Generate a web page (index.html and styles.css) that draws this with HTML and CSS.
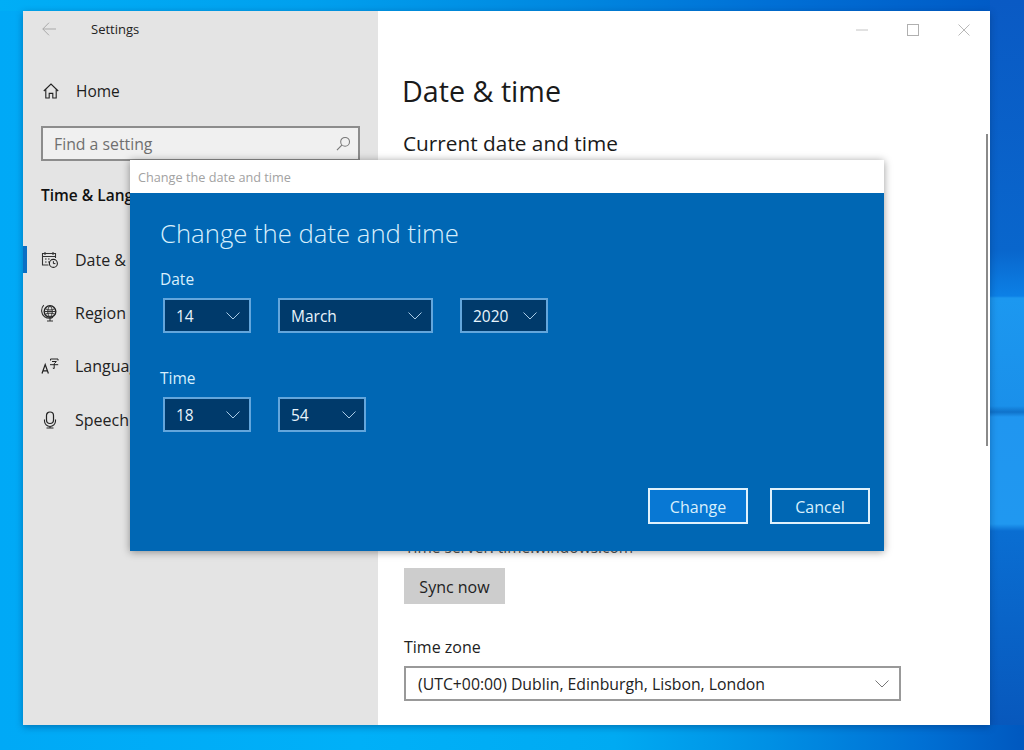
FILE: index.html
```html
<!DOCTYPE html>
<html lang="en">
<head>
<meta charset="utf-8">
<title>Settings - Date &amp; time</title>
<link rel="stylesheet" href="styles.css">
</head>
<body>
<main class="desktop">
  <section class="window">
    <aside class="nav">
      <div class="nav-title">
        <svg class="back" viewBox="0 0 14 14" width="14" height="14"><path d="M14 7H.8M7 .7L.8 7 7 13.300" fill="none" stroke="#a9a9a9" stroke-width="1"/></svg>
        <span>Settings</span>
      </div>
      <div class="nav-home">
        <svg viewBox="0 0 16 16" width="16" height="16"><path d="M.8 8L8 1l7.2 7M2.8 6.500V15h3.400v-4.600h3.600V15h3.400V6.500" fill="none" stroke="#222" stroke-width="1.100"/></svg>
        <span>Home</span>
      </div>
      <div class="search">
        <span>Find a setting</span>
        <svg viewBox="0 0 16 16" width="15" height="15"><circle cx="9.700" cy="6.200" r="4.700" fill="none" stroke="#777" stroke-width="1.100"/><path d="M6.200 9.700L1 15" stroke="#777" stroke-width="1.200"/></svg>
      </div>
      <h2 class="nav-heading">Time &amp; Language</h2>
      <ul class="nav-list">
        <li class="nav-item active">
          <svg viewBox="0 0 18 18" width="18" height="18"><path d="M7.500 14H1.500V2.500h13V7M1.500 5.500h13M4 1v3M12 1v3M4 8h1.600M7 8h1.600M4 11h1.600M7 11h1.600" fill="none" stroke="#333" stroke-width="1.100"/><circle cx="12.400" cy="12.400" r="4" fill="none" stroke="#222" stroke-width="1.100"/><path d="M12.400 10.200v2.400h2" fill="none" stroke="#222"/></svg>
          <span>Date &amp; time</span>
        </li>
        <li class="nav-item">
          <svg viewBox="0 0 18 18" width="18" height="18"><circle cx="9" cy="7.500" r="5.800" fill="none" stroke="#222" stroke-width="1.400"/><path d="M4 4.500c3 2 7 2 10 0M3.700 10.500c3-1.800 7.600-1.800 10.600 0M9 1.700c-3 3-3 8.600 0 11.600M9 1.700c3 3 3 8.600 0 11.600M3.200 7.500h11.600" fill="none" stroke="#333" stroke-width="1"/><path d="M2.800 1.200c-3.400 3.400-2.600 9.300.8 11.600 2.500 1.700 5.700 1.900 8.400.4M9 14.500V17M6 17h6" fill="none" stroke="#333" stroke-width="1.100"/></svg>
          <span>Region</span>
        </li>
        <li class="nav-item">
          <svg viewBox="0 0 18 18" width="18" height="18"><path d="M1 16.500L4.200 7.500l3.200 9M2 13.800h4.400" fill="none" stroke="#222" stroke-width="1.200"/><path d="M9.500 3.500V2H17v1.500M11 4.500h4.400l-2.200 2.200M9 7.700h8.200M13.200 6.700v4.800l-1.400-.4" fill="none" stroke="#222" stroke-width="1"/></svg>
          <span>Language</span>
        </li>
        <li class="nav-item">
          <svg viewBox="0 0 18 18" width="18" height="18"><rect x="5.500" y="1" width="7" height="11.500" rx="3.500" fill="none" stroke="#222" stroke-width="1.200"/><path d="M3.500 8.500V10a5 5 0 0 0 11 0V8.500M9 15v2M5.500 17h7" fill="none" stroke="#222" stroke-width="1.100"/></svg>
          <span>Speech</span>
        </li>
      </ul>
    </aside>
    <div class="content">
      <div class="controls">
        <svg viewBox="0 0 12 12" width="12" height="12"><path d="M0 6h12" stroke="#c4c4c4"/></svg>
        <svg viewBox="0 0 12 12" width="12" height="12"><rect x=".5" y=".5" width="11" height="11" fill="none" stroke="#b0b0b0"/></svg>
        <svg viewBox="0 0 12 12" width="12" height="12"><path d="M.5.500l11 11M11.500.500l-11 11" stroke="#b8b8b8"/></svg>
      </div>
      <h1>Date &amp; time</h1>
      <h2 class="section">Current date and time</h2>
      <p class="server">Time server: time.windows.com</p>
      <button class="sync" type="button">Sync now</button>
      <label class="tz-label">Time zone</label>
      <div class="tz">
        <span>(UTC+00:00) Dublin, Edinburgh, Lisbon, London</span>
        <svg viewBox="0 0 14 8" width="14" height="8"><path d="M.5.500L7 7 13.500.500" fill="none" stroke="#777"/></svg>
      </div>
      <div class="scrollbar"></div>
    </div>
  </section>

  <section class="dialog">
    <div class="dialog-title">Change the date and time</div>
    <div class="dialog-body">
      <h2 class="dialog-heading">Change the date and time</h2>
      <div class="field-label date-label">Date</div>
      <div class="picker-row">
        <div class="picker p-day"><span>14</span><svg viewBox="0 0 14 8" width="14" height="8"><path d="M.5.500L7 7 13.500.500" fill="none" stroke="#a9cbe6"/></svg></div>
        <div class="picker p-month"><span>March</span><svg viewBox="0 0 14 8" width="14" height="8"><path d="M.5.500L7 7 13.500.500" fill="none" stroke="#a9cbe6"/></svg></div>
        <div class="picker p-year"><span>2020</span><svg viewBox="0 0 14 8" width="14" height="8"><path d="M.5.500L7 7 13.500.500" fill="none" stroke="#a9cbe6"/></svg></div>
      </div>
      <div class="field-label time-label">Time</div>
      <div class="picker-row">
        <div class="picker p-day"><span>18</span><svg viewBox="0 0 14 8" width="14" height="8"><path d="M.5.500L7 7 13.500.500" fill="none" stroke="#a9cbe6"/></svg></div>
        <div class="picker p-min"><span>54</span><svg viewBox="0 0 14 8" width="14" height="8"><path d="M.5.500L7 7 13.500.500" fill="none" stroke="#a9cbe6"/></svg></div>
      </div>
      <div class="actions">
        <button class="btn primary" type="button">Change</button>
        <button class="btn" type="button">Cancel</button>
      </div>
    </div>
  </section>
</main>
</body>
</html>
```

FILE: styles.css
```css
* { box-sizing: border-box; }
html, body { margin: 0; height: 100%; }
body { font-family: "Open Sans", "Noto Sans", "Liberation Sans", sans-serif; overflow: hidden; }

.desktop {
  position: relative;
  width: 1024px;
  height: 750px;
  overflow: hidden;
  background:
    linear-gradient(180deg, #0a5ac4 0, #0966cc 250px, #0c80e6 296px, #1c98f0 298px, #1a90ea 406px, #0f72ca 412px, #2096f0 417px, #2098f0 524px, #0a6ed2 531px, #0858bc 725px) right top / 34px 725px no-repeat,
    linear-gradient(90deg, #00aef6 0, #00a0ee 30%, #0088e0 55%, #0070d6 75%, #0058c4 100%) left top / 100% 11px no-repeat,
    linear-gradient(90deg, #00a9f6 0, #00b0f8 35%, #00aaf2 60%, #0090e4 75%, #0070d4 90%, #0058bf 100%);
}

.window {
  position: absolute;
  left: 23px;
  top: 11px;
  width: 967px;
  height: 714px;
  display: flex;
  background: #fff;
  box-shadow: 0 2px 7px rgba(0, 40, 90, .4);
}

.nav {
  width: 355px;
  flex: none;
  background: #e4e4e4;
  color: #111;
  padding: 0 18px;
}
.nav-title {
  height: 36px;
  display: flex;
  align-items: center;
  gap: 35px;
  font-size: 13px;
  color: #222;
  margin-left: 1px;
}
.nav-home {
  display: flex;
  align-items: center;
  gap: 17px;
  margin: 34px 0 0 2px;
  height: 20px;
  font-size: 15.500px;
  color: #1c1c1c;
}
.search {
  margin-top: 25px;
  height: 35px;
  width: 319px;
  border: 2px solid #8c8c8c;
  background: #f0f0f0;
  display: flex;
  align-items: center;
  justify-content: space-between;
  padding: 0 7px 0 11px;
  font-size: 15.800px;
  color: #6f6f6f;
}
.nav-heading {
  margin: 22px 0 0;
  height: 24px;
  line-height: 24px;
  font-size: 15.500px;
  font-weight: 600;
  color: #111;
  white-space: nowrap;
}
.nav-list { list-style: none; margin: 26px -18px 0; padding: 0; }
.nav-item {
  height: 53.300px;
  display: flex;
  align-items: center;
  gap: 16px;
  padding-left: 18px;
  font-size: 16px;
  color: #222;
  white-space: nowrap;
  position: relative;
}
.nav-item.active::before {
  content: "";
  position: absolute;
  left: 0;
  top: 13px;
  width: 4px;
  height: 27px;
  background: #0a6fc4;
}

.content {
  flex: 1;
  position: relative;
  display: flex;
  flex-direction: column;
  align-items: flex-start;
  padding-left: 26px;
  color: #1a1a1a;
}
.controls {
  position: absolute;
  top: 13px;
  right: 20px;
  display: flex;
  gap: 39px;
}
h1 {
  margin: 59px 0 0 -2px;
  font-size: 28.700px;
  line-height: 42px;
  font-weight: 400;
  color: #1a1a1a;
}
.section {
  margin: 16px 0 0 -1px;
  font-size: 20.800px;
  line-height: 30px;
  font-weight: 400;
  color: #1a1a1a;
}
.server {
  margin: 380px 0 0 1px;
  font-size: 15.500px;
  line-height: 18px;
  color: #555;
  white-space: nowrap;
}
.sync {
  width: 101px;
  height: 36px;
  margin-top: 12px;
  border: 0;
  background: #cdcdcd;
  color: #222;
  font: inherit;
  font-size: 16px;
  padding: 1px 0 0;
}
.tz-label {
  margin-top: 32px;
  font-size: 16px;
  line-height: 22px;
  color: #222;
}
.tz {
  margin-top: 8px;
  width: 497px;
  height: 35px;
  border: 2px solid #999;
  background: #fff;
  display: flex;
  align-items: center;
  justify-content: space-between;
  padding: 0 10px 0 12px;
  font-size: 15.800px;
  color: #222;
}
.scrollbar {
  position: absolute;
  top: 123px;
  right: 2px;
  width: 2px;
  height: 312px;
  background: #8a8a8a;
}

.dialog {
  position: absolute;
  left: 130px;
  top: 160px;
  width: 754px;
  height: 391px;
  display: flex;
  flex-direction: column;
  background: #fff;
  box-shadow: 0 1px 8px rgba(0, 0, 0, .4);
}
.dialog-title {
  height: 33px;
  flex: none;
  padding: 1px 0 0 8px;
  display: flex;
  align-items: center;
  font-size: 12.700px;
  color: #a2a2a2;
}
.dialog-body {
  flex: 1;
  background: #0067b4;
  color: #fff;
  padding: 21px 14px 0 30px;
  display: flex;
  flex-direction: column;
}
.dialog-heading {
  margin: 0;
  font-size: 25.700px;
  line-height: 40px;
  font-weight: 300;
  color: #d8effc;
  white-space: nowrap;
}
.field-label {
  font-size: 15.500px;
  line-height: 24px;
  color: #d8effc;
}
.date-label { margin-top: 13px; }
.time-label { margin-top: 33px; }
.picker-row {
  display: flex;
  gap: 27px;
  margin: 7px 0 0 3px;
}
.picker {
  height: 35px;
  border: 2px solid #63a6dc;
  background: #003a6b;
  color: #e8f4fc;
  display: flex;
  align-items: center;
  justify-content: space-between;
  padding: 0 9px 0 11px;
  font-size: 15.500px;
}
.p-day { width: 88px; }
.p-month { width: 155px; }
.p-year { width: 88px; }
.p-min { width: 88px; padding-right: 8px; }
.actions {
  margin-top: auto;
  margin-bottom: 27px;
  display: flex;
  justify-content: flex-end;
  gap: 22px;
}
.btn {
  width: 100px;
  height: 36px;
  border: 2px solid #dff1fc;
  background: #0067b4;
  color: #d8effc;
  font: inherit;
  font-size: 16px;
  padding: 1px 0 0;
}
.btn.primary { background: #0878d4; }
```
